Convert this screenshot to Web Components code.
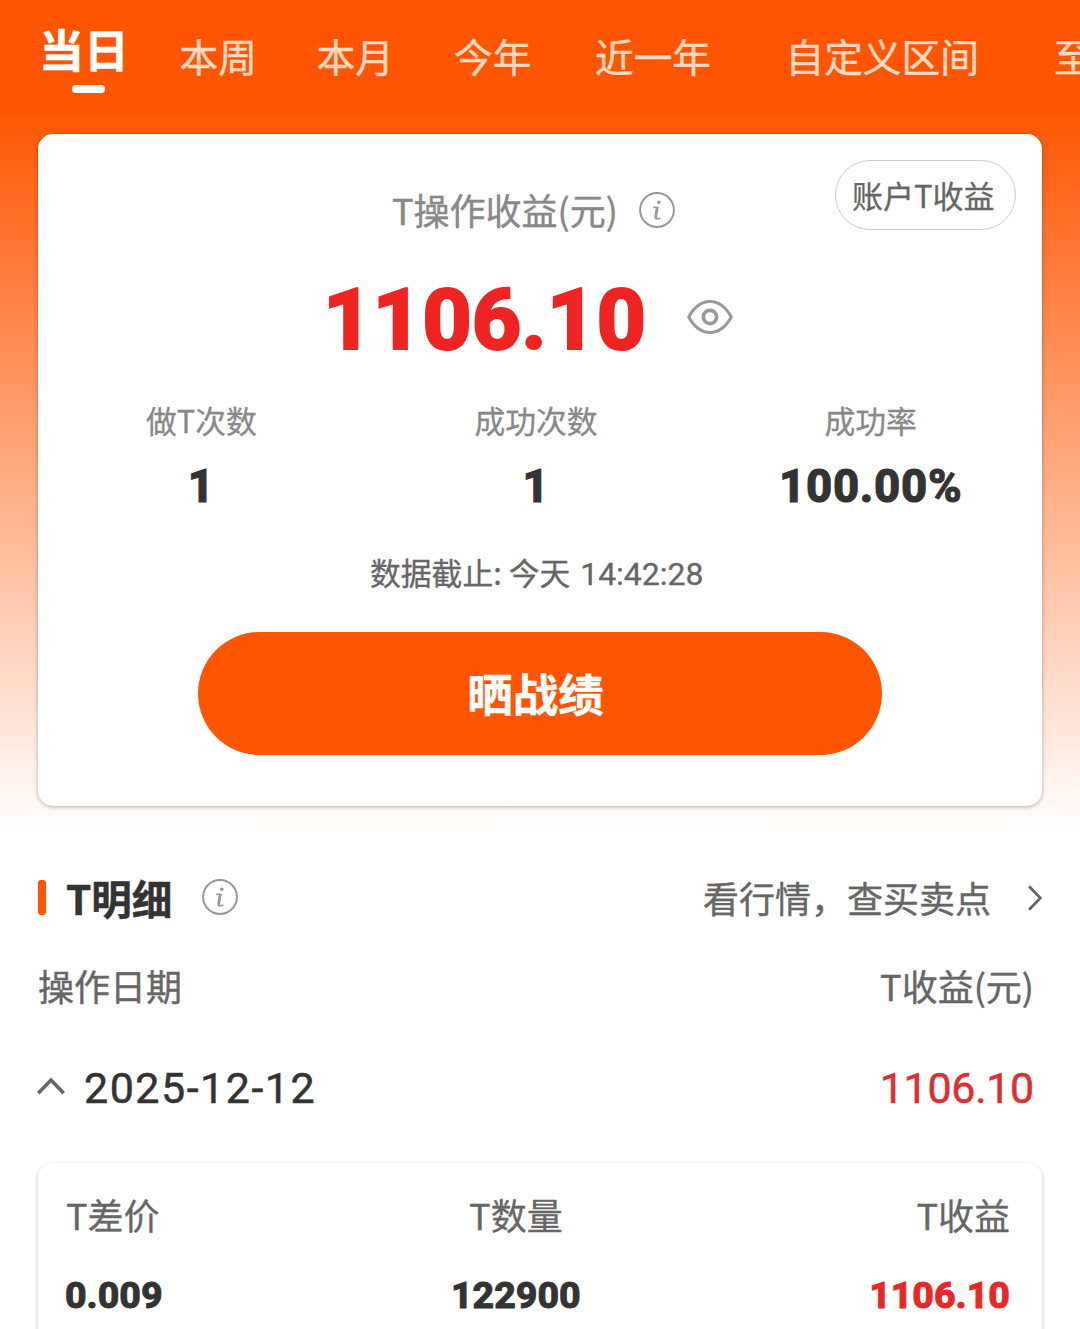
<!DOCTYPE html>
<html lang="zh-CN">
<head>
<meta charset="utf-8">
<meta name="viewport" content="width=device-width, initial-scale=1">
<title>T收益</title>
<style>
    html, body {
        margin: 0;
        height: 1329px;
        overflow: hidden;
    }
    body {
        --num: Roboto, "Noto Sans", "Noto Sans CJK SC", sans-serif;
        --brand: #ff5500;
        --red: #f02323;
        font-family: "Noto Sans CJK SC", "Noto Sans", sans-serif;
        color: #333;
        background: #fff;
    }
</style>
</head>
<body>
<profit-page></profit-page>

<script>
class BaseElement extends HTMLElement {
    constructor() {
        super();
        const template = document.createElement("template");
        template.innerHTML = this.constructor.markup;
        this.attachShadow({ mode: "open" });
        this.shadowRoot.appendChild(template.content.cloneNode(true));
    }
}

class InfoIcon extends BaseElement {
    static markup = `
        <style>
            :host { display: block; width: 36px; height: 36px; }
            svg { display: block; }
        </style>
        <svg width="36" height="36" viewBox="-18 -18 36 36" fill="none" stroke="#999">
            <circle r="16.9" stroke-width="2"/>
            <circle cx="1.8" cy="-7.7" r="1.8" fill="#999" stroke="none"/>
            <path d="M-3.8 -2.6H-0.5" stroke-width="1.6"/>
            <path d="M0.4 -3.3L-1.3 6.4Q-1.5 8.4 0.2 8.4" stroke-width="2.8"/>
            <path d="M-0.4 8.6Q1.8 8.9 3.4 7.9" stroke-width="1.5"/>
        </svg>
    `;
}
customElements.define("info-icon", InfoIcon);

class EyeIcon extends BaseElement {
    static markup = `
        <style>
            :host { display: block; width: 46px; height: 34px; }
            svg { display: block; }
        </style>
        <svg width="46" height="34" viewBox="0 0 46 34" fill="none" stroke="#999" stroke-width="3" stroke-linejoin="round">
            <path d="M1.7 17C7 7.5 14.5 1.6 23 1.6S39 7.5 44.3 17C39 26.5 31.5 32.4 23 32.4S7 26.5 1.7 17Z"/>
            <circle cx="23" cy="17" r="6.6" stroke-width="3.6"/>
        </svg>
    `;
}
customElements.define("eye-icon", EyeIcon);

class PeriodTab extends BaseElement {
    static markup = `
        <style>
            :host {
                display: flex;
                flex-direction: column;
                align-items: flex-start;
                white-space: nowrap;
                color: #ffd9c2;
                font-size: 38.7px;
                line-height: 58px;
                padding-top: 26px;
                -webkit-text-stroke: 0.5px currentColor;
            }
            .bar { display: none; }
            :host([active]) {
                color: #fff;
                font-size: 45px;
                font-weight: 700;
                line-height: 64px;
                padding-top: 17px;
            }
            :host([active]) .bar {
                display: block;
                width: 33px;
                height: 8px;
                border-radius: 4px;
                background: #fff;
                margin: 4px 0 0 33px;
            }
        </style>
        <slot></slot>
        <div class="bar"></div>
    `;
}
customElements.define("period-tab", PeriodTab);

class PeriodTabs extends BaseElement {
    static markup = `
        <style>
            :host {
                display: grid;
                grid-template-columns: 140.5px 137px 137.5px 141px 190.5px 268.5px 40px;
                height: 134px;
                padding-left: 39px;
                box-sizing: border-box;
                overflow: hidden;
            }
        </style>
        <slot></slot>
    `;
}
customElements.define("period-tabs", PeriodTabs);

class StatItem extends BaseElement {
    static markup = `
        <style>
            :host {
                display: flex;
                flex-direction: column;
                align-items: center;
            }
            .label {
                font-size: 30.8px;
                line-height: 46px;
                color: #888;
                -webkit-text-stroke: 0.3px currentColor;
            }
            .value {
                font: 800 45.5px/60px var(--num);
                margin-top: 14px;
                letter-spacing: 0.7px;
                -webkit-text-stroke: 1px currentColor;
            }
        </style>
        <div class="label"><slot name="label"></slot></div>
        <div class="value"><slot></slot></div>
    `;
}
customElements.define("stat-item", StatItem);

class SummaryCard extends BaseElement {
    static markup = `
        <style>
            :host {
                display: flex;
                flex-direction: column;
                height: 672px;
                margin: 0 38px;
                border-radius: 15px;
                background: #fff;
                box-shadow: 0 1px 4px rgba(0, 0, 0, 0.3);
            }
            .head {
                display: flex;
                align-items: flex-start;
                height: 126px;
                padding: 26px 26px 0 354px;
                box-sizing: border-box;
            }
            .title {
                font-size: 36px;
                line-height: 52px;
                color: #888;
                margin-top: 23px;
                -webkit-text-stroke: 0.4px currentColor;
            }
            info-icon { margin: 32px 0 0 21px; }
            .pill {
                box-sizing: border-box;
                width: 181px;
                height: 70px;
                margin-left: auto;
                padding-left: 16px;
                border: 1px solid #ccc;
                border-radius: 35px;
                font-size: 31px;
                line-height: 67px;
                color: #666;
                -webkit-text-stroke: 0.3px currentColor;
            }
            .total {
                display: flex;
                align-items: center;
                height: 114px;
                padding-left: 285px;
            }
            .amount {
                font: 800 86px/114px var(--num);
                color: var(--red);
                width: 364px;
                margin-top: 6px;
                -webkit-text-stroke: 2px currentColor;
            }
            .stats {
                display: grid;
                grid-template-columns: repeat(3, 1fr);
                margin: 23px 4px 0 -4px;
            }
            .time {
                font-size: 30.8px;
                line-height: 46px;
                color: #666;
                margin: 32px 0 0 332px;
                white-space: nowrap;
                -webkit-text-stroke: 0.3px currentColor;
            }
            .time span { font-family: var(--num); font-size: 32px; margin-left: 3px; }
            .share {
                width: 684px;
                height: 123px;
                margin: 35px auto 0;
                padding: 0 9px 1px 0;
                box-sizing: border-box;
                border: none;
                border-radius: 62px;
                background: var(--brand);
                color: #fff;
                font: 700 45.5px/1 "Noto Sans CJK SC", sans-serif;
                -webkit-text-stroke: 0.5px currentColor;
            }
        </style>
        <div class="head">
            <div class="title">T操作收益(元)</div>
            <info-icon></info-icon>
            <div class="pill">账户T收益</div>
        </div>
        <div class="total">
            <div class="amount">1106.10</div>
            <eye-icon></eye-icon>
        </div>
        <div class="stats">
            <stat-item><span slot="label">做T次数</span>1</stat-item>
            <stat-item><span slot="label">成功次数</span>1</stat-item>
            <stat-item><span slot="label">成功率</span>100.00%</stat-item>
        </div>
        <div class="time">数据截止: 今天 <span>14:42:28</span></div>
        <button class="share">晒战绩</button>
    `;
}
customElements.define("summary-card", SummaryCard);

class SectionHeader extends BaseElement {
    static markup = `
        <style>
            :host {
                display: flex;
                align-items: center;
                height: 60px;
                margin: 61px 38px 0;
            }
            .mark {
                width: 8px;
                height: 35px;
                border-radius: 3px;
                background: var(--brand);
            }
            .title {
                font-size: 40.5px;
                font-weight: 700;
                line-height: 60px;
                margin: 2px 0 0 20px;
                -webkit-text-stroke: 0.5px currentColor;
            }
            info-icon { margin-left: 29.5px; }
            .link {
                margin: 0 37px 0 auto;
                font-size: 36px;
                line-height: 60px;
                color: #666;
                -webkit-text-stroke: 0.4px currentColor;
            }
            svg { display: block; margin-top: 1px; }
        </style>
        <div class="mark"></div>
        <div class="title"><slot></slot></div>
        <info-icon></info-icon>
        <div class="link"><slot name="link"></slot></div>
        <svg width="14" height="26" viewBox="0 0 14 26" fill="none" stroke="#666" stroke-width="2.8">
            <path d="M1 1.2L12.4 13L1 24.8"/>
        </svg>
    `;
}
customElements.define("section-header", SectionHeader);

class DayRow extends BaseElement {
    static markup = `
        <style>
            :host { display: block; margin: 0 46px 0 38px; }
            .heads, .day { display: flex; align-items: center; }
            .heads {
                justify-content: space-between;
                font-size: 36px;
                line-height: 54px;
                color: #666;
                margin-top: 31px;
                -webkit-text-stroke: 0.4px currentColor;
            }
            .day {
                font: 400 43px/60px var(--num);
                margin-top: 46px;
                -webkit-text-stroke: 0.5px currentColor;
            }
            .date { margin-left: 19px; letter-spacing: 1.5px; }
            .sum { margin-left: auto; color: #dc2f2f; letter-spacing: -0.3px; }
            svg { display: block; margin: -4px 0 0 -1px; }
        </style>
        <div class="heads"><span>操作日期</span><span>T收益(元)</span></div>
        <div class="day">
            <svg width="28" height="18" viewBox="0 0 28 18" fill="none" stroke="#666" stroke-width="3.6">
                <path d="M1.3 16.2L14 3L26.7 16.2"/>
            </svg>
            <span class="date"><slot name="date"></slot></span>
            <span class="sum"><slot name="sum"></slot></span>
        </div>
    `;
}
customElements.define("day-row", DayRow);

class DetailCell extends BaseElement {
    static markup = `
        <style>
            :host { display: flex; flex-direction: column; align-items: center; }
            :host([side="start"]) { align-items: flex-start; }
            :host([side="end"]) { align-items: flex-end; }
            .label {
                font-size: 36px;
                line-height: 54px;
                color: #666;
                -webkit-text-stroke: 0.3px currentColor;
            }
            .value {
                font: 800 37.5px/50px var(--num);
                margin-top: 29px;
                -webkit-text-stroke: 0.9px currentColor;
            }
            :host([side="start"]) .value { margin-left: -1px; }
            :host([red]) .value { color: #e82727; }
        </style>
        <div class="label"><slot name="label"></slot></div>
        <div class="value"><slot></slot></div>
    `;
}
customElements.define("detail-cell", DetailCell);

class DetailCard extends BaseElement {
    static markup = `
        <style>
            :host {
                display: flex;
                justify-content: space-between;
                height: 240px;
                margin: 45px 38px 0;
                padding: 24px 32px 0 28px;
                box-sizing: border-box;
                border-radius: 15px;
                background: #fff;
                box-shadow: 0 2px 4px rgba(0, 0, 0, 0.25);
            }
        </style>
        <slot></slot>
    `;
}
customElements.define("detail-card", DetailCard);

class ProfitPage extends BaseElement {
    static markup = `
        <style>
            :host {
                display: block;
                height: 1329px;
                overflow: hidden;
                background: linear-gradient(var(--brand) 105px, #fff 832px);
            }
        </style>
        <period-tabs>
            <period-tab active>当日</period-tab>
            <period-tab>本周</period-tab>
            <period-tab>本月</period-tab>
            <period-tab>今年</period-tab>
            <period-tab>近一年</period-tab>
            <period-tab>自定义区间</period-tab>
            <period-tab>至</period-tab>
        </period-tabs>
        <summary-card></summary-card>
        <section-header>T明细<span slot="link">看行情，查买卖点</span></section-header>
        <day-row>
            <span slot="date">2025-12-12</span>
            <span slot="sum">1106.10</span>
        </day-row>
        <detail-card>
            <detail-cell side="start"><span slot="label">T差价</span>0.009</detail-cell>
            <detail-cell><span slot="label">T数量</span>122900</detail-cell>
            <detail-cell side="end" red><span slot="label">T收益</span>1106.10</detail-cell>
        </detail-card>
    `;
}
customElements.define("profit-page", ProfitPage);
</script>
</body>
</html>
